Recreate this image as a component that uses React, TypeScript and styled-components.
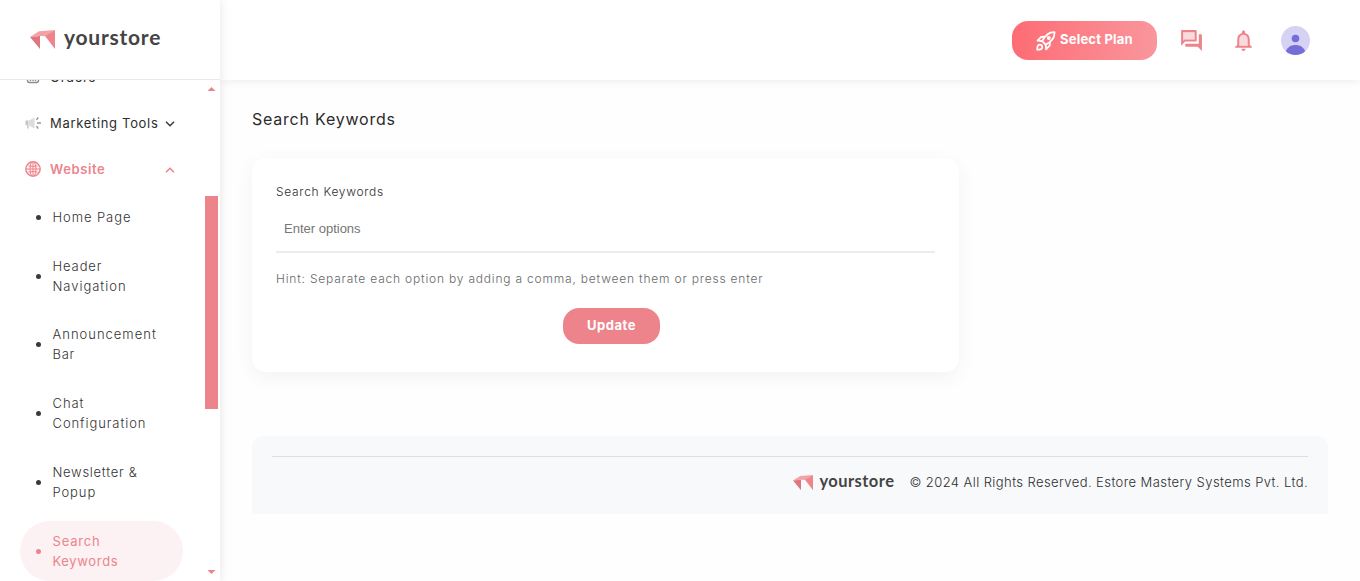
import React from "react";
import styled, { createGlobalStyle } from "styled-components";

const pink = "#ed848c";

const GlobalStyle = createGlobalStyle`
  * { box-sizing: border-box; }
  body { margin: 0; background: #fefefe; overflow: hidden; font-family: Inter, "Open Sans", sans-serif; color: #333; }
`;

const Page = styled.div`
  display: flex;
  width: 1360px;
  height: 581px;
`;

const Sidebar = styled.aside`
  display: flex;
  flex-direction: column;
  flex: 0 0 220px;
  background: #fff;
  box-shadow: 0 0 10px rgba(0, 0, 0, 0.1);
  z-index: 2;
`;

const Brand = styled.div`
  flex: 0 0 80px;
  display: flex;
  align-items: flex-start;
  padding: 30px 0 0 30px;
  border-bottom: 1px solid #e9e9e9;
`;

const LogoRow = styled.div<{ $size: number; $gap: number; $spacing: number }>`
  display: flex;
  align-items: center;
  gap: ${(p) => p.$gap}px;
  font: 700 ${(p) => p.$size}px/1 Lato, sans-serif;
  letter-spacing: ${(p) => p.$spacing}px;
  color: #444;
  height: 19px;
`;

const LogoText = styled.span<{ $lift: number }>`
  padding-bottom: ${(p) => p.$lift}px;
`;

const ScrollArea = styled.div`
  flex: 1;
  min-height: 0;
  overflow: hidden;
  display: flex;
  justify-content: space-between;
`;

const Menu = styled.nav`
  width: 163px;
  margin: -26px 0 0 20px;
`;

const MenuItem = styled.div<{ $active?: boolean }>`
  display: flex;
  align-items: center;
  height: 46px;
  padding-left: 5px;
  font-size: 13px;
  font-weight: ${(p) => (p.$active ? 600 : 400)};
  color: ${(p) => (p.$active ? pink : "#2e2e2e")};
`;

const MenuIcon = styled.span`
  width: 25px;
  display: flex;
`;

const Label = styled.span<{ $spacing: number }>`
  letter-spacing: ${(p) => p.$spacing}px;
  white-space: nowrap;
`;

const Caret = styled.svg`
  margin: 1px 8px 0 auto;
`;

const SubMenu = styled.div`
  display: flex;
  flex-direction: column;
  gap: 8.8px;
  padding-top: 4.8px;
`;

const SubItem = styled.div<{ $active?: boolean }>`
  display: flex;
  align-items: center;
  flex-shrink: 0;
  gap: 11.5px;
  padding: 10px 0 10px 16px;
  border-radius: 30px;
  font-size: 13px;
  font-weight: ${(p) => (p.$active ? 400 : 300)};
  line-height: 20px;
  color: ${(p) => (p.$active ? pink : "#333")};
  background: ${(p) => (p.$active ? "#fcf1f3" : "transparent")};
`;

const Dot = styled.i<{ $active?: boolean }>`
  width: 5px;
  height: 5px;
  margin-top: 1px;
  border-radius: 50%;
  background: ${(p) => (p.$active ? pink : "#3a3a3a")};
`;

const Lines = styled.div`
  display: flex;
  flex-direction: column;
`;

const ScrollTrack = styled.div`
  display: flex;
  flex-direction: column;
  align-items: center;
  width: 13px;
  margin-right: 2px;
  padding: 7px 0;
`;

const Thumb = styled.div`
  width: 13px;
  height: 213px;
  margin: 105px 0 auto;
  background: ${pink};
`;

const Arrow = styled.div<{ $down?: boolean }>`
  width: 8px;
  height: 4px;
  background: ${pink};
  clip-path: ${(p) => (p.$down ? "polygon(0 0, 100% 0, 50% 100%)" : "polygon(50% 0, 100% 100%, 0 100%)")};
`;

const Main = styled.main`
  flex: 1;
  display: flex;
  flex-direction: column;
`;

const TopBar = styled.header`
  flex: 0 0 80px;
  display: flex;
  align-items: center;
  justify-content: flex-end;
  padding: 1px 50px 0 0;
  background: #fff;
  box-shadow: 0 0 10px rgba(0, 0, 0, 0.09);
`;

const PlanButton = styled.button`
  display: flex;
  align-items: center;
  gap: 4px;
  width: 145px;
  height: 39px;
  padding: 0 0 0 24px;
  margin-right: 22px;
  border: 0;
  border-radius: 16px;
  background: linear-gradient(90deg, #fd6c74, #fa969d);
  color: #fff;
  font: 700 13px Inter, sans-serif;
`;

const PlanText = styled.span`
  padding-bottom: 3px;
  letter-spacing: 0.2px;
  white-space: nowrap;
`;

const Bell = styled.svg`
  margin: 0 25px 0 27px;
`;

const Content = styled.div`
  padding: 28px 32px 0;
`;

const Title = styled.h1`
  margin: 0;
  font-size: 16px;
  line-height: 22px;
  font-weight: 400;
  letter-spacing: 0.78px;
  color: #2b2b2b;
`;

const Card = styled.section`
  display: flex;
  flex-direction: column;
  width: 707px;
  height: 214px;
  margin-top: 28px;
  padding: 24px;
  border-radius: 14px;
  background: #fff;
  box-shadow: 0 5px 20px rgba(0, 0, 0, 0.05);
`;

const FieldLabel = styled.label`
  font-size: 12px;
  font-weight: 300;
  line-height: 20px;
  color: #2e2e2e;
`;

const Input = styled.input`
  height: 51px;
  padding: 4px 8px 0;
  border: 0;
  border-bottom: 2px solid #ececee;
  outline: 0;
  background: transparent;
  font: 13px "Liberation Sans", Arial, sans-serif;
  &::placeholder { color: #757575; opacity: 1; }
`;

const Hint = styled.p`
  margin: 16px 0 0;
  font-size: 12px;
  font-weight: 300;
  line-height: 20px;
  color: #686868;
`;

const UpdateButton = styled.button`
  align-self: center;
  width: 97px;
  height: 36px;
  margin: 19px 0 0 12px;
  padding: 0 0 2px;
  border: 0;
  border-radius: 16px;
  background: ${pink};
  color: #fff;
  font: 700 13px Inter, sans-serif;
`;

const Footer = styled.footer`
  height: 78px;
  margin-top: 64px;
  padding: 20px 20px 0;
  border-radius: 10px 10px 0 0;
  background: #f8f9fb;
`;

const FooterRow = styled.div`
  display: flex;
  justify-content: flex-end;
  align-items: center;
  gap: 15px;
  padding-top: 15px;
  border-top: 1px solid #dedfe2;
  font-size: 13px;
  font-weight: 300;
  line-height: 21px;
  color: #2e2e2e;
`;

const Logo = ({ size, mark, gap, spacing, lift }: { size: number; mark: number; gap: number; spacing: number; lift: number }) => (
  <LogoRow $size={size} $gap={gap} $spacing={spacing}>
    <svg width={mark} height={mark * 0.76} viewBox="0 0 25 19">
      <path d="M0 7 9 1.3 25 0 15 6.2 10 6z" fill="#f2a3a8" />
      <path d="M0 7 10 6V19z" fill="#dd777f" />
      <path d="M25 0V19L15 6z" fill="#ee858d" />
    </svg>
    <LogoText $lift={lift}>yourstore</LogoText>
  </LogoRow>
);

const OrdersIcon = () => (
  <svg width="16" height="16" viewBox="0 0 16 16" fill="none" stroke="#8b8b8b" strokeWidth="1.4">
    <path d="M2.500 5h11v6.500a2 2 0 0 1-2 2h-7a2 2 0 0 1-2-2zM5.500 8v4M8 8v4M10.500 8v4" />
  </svg>
);

const MegaphoneIcon = () => (
  <svg width="16" height="14" viewBox="0 0 16 14">
    <path d="M4 4.500 9.500 1.500v11L4 9.500z" fill="#dcdcdc" />
    <path d="M.5 4.500h3v4.800h-3zM2.200 9v3.500h1.500V9" fill="#c6c6c6" />
    <path d="M11.500 3.800l1.700-2.300M12 7h4M11.500 10.200l1.700 2.300" stroke="#969696" strokeWidth="1.4" fill="none" />
  </svg>
);

const GlobeIcon = () => (
  <svg width="16" height="16" viewBox="0 0 16 16">
    <circle cx="8" cy="8" r="7.200" fill="#fdf0f1" stroke={pink} strokeWidth="1.400" />
    <path d="M8 1v14M1 8h14M3.500 4.800c3 .8 6 .8 9 0M3.500 11.200c3-.8 6-.8 9 0M6.500 1.200C4.600 4 4.600 12 6.500 14.800M9.500 1.200c1.900 2.800 1.900 10.800 0 13.600" fill="none" stroke={pink} strokeWidth="1" />
  </svg>
);

const RocketIcon = () => (
  <svg width="20" height="20" viewBox="0 0 20 20" fill="none" stroke="#fff" strokeWidth="1.800" strokeLinejoin="round">
    <path d="M18.500 1.200C13.500 1 9.800 3.200 6.200 10.200l3.400 3.400c7-3.600 9.200-7.400 8.900-12.400z" />
    <path d="M9 5.700 5.200 6 1.500 9.700l4.700.5M14 10.800l-.2 3.600-3.700 4-.5-4.800" />
    <circle cx="12.800" cy="7" r="1.100" fill="#fff" />
    <path d="M1.200 18.700c0-3 .6-5 2.600-5 1.500 0 2.600 1.200 2.400 2.600-.2 1.800-2.200 2.400-5 2.400z" />
  </svg>
);

const subItems = [
  { lines: ["Home Page"], spacing: [0.93] },
  { lines: ["Header", "Navigation"], spacing: [0.9, 0.97] },
  { lines: ["Announcement", "Bar"], spacing: [1, 0.75] },
  { lines: ["Chat", "Configuration"], spacing: [0.95, 0.92] },
  { lines: ["Newsletter &", "Popup"], spacing: [0.72, 0.9] },
  { lines: ["Search", "Keywords"], spacing: [0.8, 0.65], active: true },
];

export default function App() {
  return (
    <Page>
      <GlobalStyle />
      <Sidebar>
        <Brand>
          <Logo size={21} mark={25} gap={9} spacing={0.77} lift={7} />
        </Brand>
        <ScrollArea>
          <Menu>
            <MenuItem>
              <MenuIcon><OrdersIcon /></MenuIcon>
              <Label $spacing={0.7}>Orders</Label>
            </MenuItem>
            <MenuItem>
              <MenuIcon><MegaphoneIcon /></MenuIcon>
              <Label $spacing={0.68}>Marketing Tools</Label>
              <Caret width="10" height="6" viewBox="0 0 10 6" fill="none" stroke="#3a3a3a" strokeWidth="1.500"><path d="M1 .8 5 4.800 9 .8" /></Caret>
            </MenuItem>
            <MenuItem $active>
              <MenuIcon><GlobeIcon /></MenuIcon>
              <Label $spacing={0.6}>Website</Label>
              <Caret width="10" height="6" viewBox="0 0 10 6" fill="none" stroke={pink} strokeWidth="1.500"><path d="M1 5.200 5 1.200 9 5.200" /></Caret>
            </MenuItem>
            <SubMenu>
              {subItems.map((item) => (
                <SubItem key={item.lines[0]} $active={item.active}>
                  <Dot $active={item.active} />
                  <Lines>
                    {item.lines.map((line, i) => (
                      <Label key={line} $spacing={item.spacing[i]}>{line}</Label>
                    ))}
                  </Lines>
                </SubItem>
              ))}
            </SubMenu>
          </Menu>
          <ScrollTrack>
            <Arrow />
            <Thumb />
            <Arrow $down />
          </ScrollTrack>
        </ScrollArea>
      </Sidebar>
      <Main>
        <TopBar>
          <PlanButton>
            <RocketIcon />
            <PlanText>Select Plan</PlanText>
          </PlanButton>
          <svg width="25" height="25" viewBox="0 0 24 24" fill={pink}>
            <path d="M15 11V4H4v8.170L5.170 11H15z" opacity=".3" />
            <path d="M15 4v7H5.170L4 12.170V4h11m1-2H3c-.55 0-1 .45-1 1v14l4-4h10c.55 0 1-.45 1-1V3c0-.55-.45-1-1-1zm5 4h-2v9H6v2c0 .55.45 1 1 1h11l4 4V7c0-.55-.45-1-1-1z" />
          </svg>
          <Bell width="25" height="25" viewBox="0 0 24 24" fill={pink}>
            <path d="M12 6.500c-2.490 0-4 2.020-4 4.500v6h8v-6c0-2.480-1.510-4.500-4-4.500z" opacity=".3" />
            <path d="M12 22c1.100 0 2-.9 2-2h-4c0 1.100.9 2 2 2zm6-6v-5c0-3.070-1.630-5.640-4.500-6.320V4c0-.83-.67-1.500-1.500-1.500s-1.500.67-1.500 1.500v.68C7.640 5.360 6 7.920 6 11v5l-2 2v1h16v-1l-2-2zm-2 1H8v-6c0-2.480 1.510-4.500 4-4.500s4 2.020 4 4.500v6z" />
          </Bell>
          <svg width="29" height="29" viewBox="0 0 29 29">
            <circle cx="14.500" cy="14.500" r="14.500" fill="#d5d2f3" />
            <circle cx="14.500" cy="12.500" r="3.800" fill="#776dda" />
            <path d="M4.800 25.200C6.600 21 10 19 14.500 19s7.900 2 9.700 6.200A14.500 14.500 0 0 1 4.800 25.200z" fill="#776dda" />
          </svg>
        </TopBar>
        <Content>
          <Title>Search Keywords</Title>
          <Card>
            <FieldLabel htmlFor="keywords"><Label $spacing={0.7}>Search Keywords</Label></FieldLabel>
            <Input id="keywords" placeholder="Enter options" />
            <Hint><Label $spacing={0.8}>Hint: Separate each option by adding a comma, between them or press enter</Label></Hint>
            <UpdateButton><Label $spacing={0.5}>Update</Label></UpdateButton>
          </Card>
          <Footer>
            <FooterRow>
              <Logo size={16.5} mark={20} gap={6} spacing={0.46} lift={3} />
              <Label $spacing={0.42}>© 2024 All Rights Reserved. Estore Mastery Systems Pvt. Ltd.</Label>
            </FooterRow>
          </Footer>
        </Content>
      </Main>
    </Page>
  );
}
